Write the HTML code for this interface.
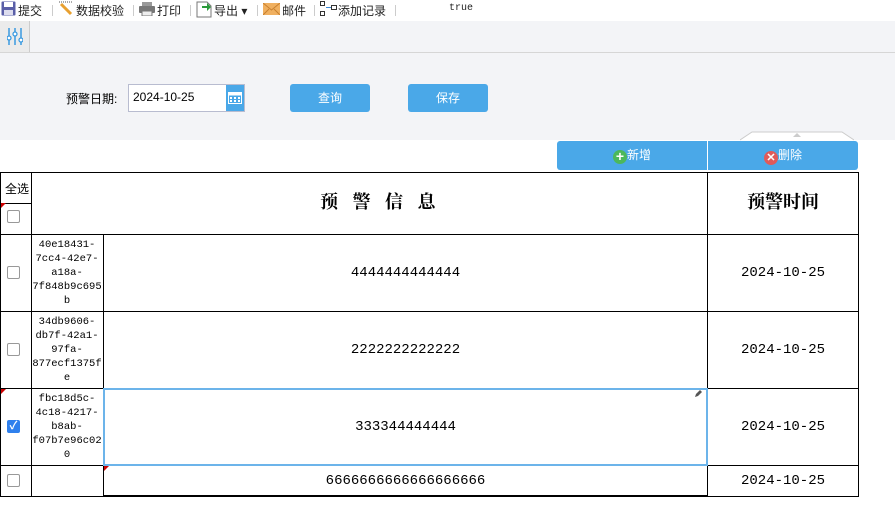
<!DOCTYPE html>
<html><head><meta charset="utf-8"><style>
*{margin:0;padding:0;box-sizing:border-box}
body{width:895px;height:515px;position:relative;background:#fff;font-family:"Liberation Sans","Noto Sans CJK SC",sans-serif;font-size:12px;color:#000;overflow:hidden}
.a{position:absolute}
.tb{left:0;top:0;width:895px;height:21px;background:#fff}
.tb span{position:absolute;top:2px;font-size:12px;color:#222}
.sep{position:absolute;top:5px;width:1px;height:11px;background:#ccc}
.hl{background:#000;height:1px}
.vl{background:#000;width:1px}
.mono{font-family:"Liberation Mono","Noto Sans CJK SC",monospace}
.cb{width:13px;height:13px;border:1px solid #999;border-radius:2px;background:#fff}
.uid{font-family:"Liberation Mono",monospace;font-size:10.5px;line-height:14px;text-align:center;width:72px;left:31px}
.c{text-align:center}
.btn{background:#4aa8e8;color:#fff;border-radius:3px;text-align:center;font-size:12px}
</style></head><body>
<div class="a tb">
 <svg class="a" style="left:1px;top:1px" width="15" height="15"><rect x="0.5" y="0.5" width="14" height="14" fill="#5a5fa8" rx="1"/><rect x="3" y="1" width="9" height="5" fill="#fff"/><rect x="3" y="9" width="9" height="5" fill="#dde"/></svg>
 <span style="left:18px">提交</span><div class="sep" style="left:52px"></div>
 <svg class="a" style="left:58px;top:1px" width="16" height="16"><line x1="3" y1="3" x2="13" y2="13" stroke="#e8a030" stroke-width="3"/><line x1="1" y1="1" x2="14" y2="1" stroke="#555" stroke-dasharray="1,1"/></svg>
 <span style="left:76px">数据校验</span><div class="sep" style="left:133px"></div>
 <svg class="a" style="left:139px;top:2px" width="16" height="14"><rect x="0" y="4" width="16" height="7" fill="#777" rx="1"/><rect x="3" y="0" width="10" height="4" fill="#999"/><rect x="3" y="9" width="10" height="5" fill="#eee" stroke="#777"/></svg>
 <span style="left:157px">打印</span><div class="sep" style="left:190px"></div>
 <svg class="a" style="left:196px;top:1px" width="16" height="17"><path d="M1 1h10l4 4v11H1z" fill="#fff" stroke="#777"/><path d="M6 5h5V2l4 4-4 4V7H6z" fill="#2a9a3a"/></svg>
 <span style="left:214px">导出 ▾</span><div class="sep" style="left:257px"></div>
 <svg class="a" style="left:263px;top:3px" width="17" height="12"><rect width="17" height="12" fill="#f0b060"/><path d="M0 0l8.5 7L17 0M0 12l6-6M17 12l-6-6" stroke="#c88030" fill="none"/></svg>
 <span style="left:282px">邮件</span><div class="sep" style="left:314px"></div>
 <svg class="a" style="left:320px;top:1px" width="18" height="16"><rect x="0.5" y="0.5" width="4" height="4" fill="none" stroke="#333"/><rect x="0.5" y="10.5" width="4" height="4" fill="none" stroke="#333"/><rect x="11.5" y="4.5" width="5" height="4" fill="none" stroke="#333"/><path d="M6 6.5h5" stroke="#3a8ad8"/></svg>
 <span style="left:338px">添加记录</span><div class="sep" style="left:395px"></div>
 <span class="mono" style="left:449px;font-size:10px;top:3px">true</span>
</div>
<div class="a" style="left:0;top:21px;width:895px;height:119px;background:#f3f4f7"></div>
<div class="a" style="left:0;top:21px;width:30px;height:31px;background:#ebebeb;border-right:1px solid #ccc"></div>
<div class="a" style="left:0;top:52px;width:895px;height:1px;background:#d6d6d6"></div>
<svg class="a" style="left:7px;top:28px" width="16" height="17"><g stroke="#3a9ae0" stroke-width="1.5" fill="none"><line x1="2" y1="0" x2="2" y2="17"/><line x1="8" y1="0" x2="8" y2="17"/><line x1="14" y1="0" x2="14" y2="17"/></g><g fill="#fff" stroke="#3a9ae0" stroke-width="1.3"><circle cx="2" cy="10" r="2"/><circle cx="8" cy="6" r="2"/><circle cx="14" cy="12" r="2"/></g></svg>
<div class="a" style="left:66px;top:90px;font-size:12px">预警日期:</div>
<div class="a" style="left:128px;top:84px;width:117px;height:28px;border:1px solid #b8bcd0;background:#fff"></div>
<div class="a" style="left:133px;top:90px;font-size:12px">2024-10-25</div>
<div class="a" style="left:226px;top:85px;width:18px;height:26px;background:#4aa8e8"></div>
<svg class="a" style="left:228px;top:91px" width="14" height="13"><rect x="0.5" y="1.5" width="13" height="11" fill="none" stroke="#fff"/><rect x="0.5" y="1.5" width="13" height="3" fill="#fff"/><g fill="#fff"><rect x="2" y="6" width="2" height="2"/><rect x="6" y="6" width="2" height="2"/><rect x="10" y="6" width="2" height="2"/><rect x="2" y="9" width="2" height="2"/><rect x="6" y="9" width="2" height="2"/><rect x="10" y="9" width="2" height="2"/></g></svg>
<div class="a btn" style="left:290px;top:84px;width:80px;height:28px;line-height:28px">查询</div>
<div class="a btn" style="left:408px;top:84px;width:80px;height:28px;line-height:28px">保存</div>
<svg class="a" style="left:740px;top:131px" width="114" height="10"><path d="M0 9L12 1H102L114 9" fill="#fff" stroke="#ccc"/><path d="M53 6l4-4 4 4z" fill="#ccc"/></svg>
<div class="a btn" style="left:557px;top:141px;width:150px;height:29px;line-height:29px;border-radius:3px 0 0 3px"><span style="display:inline-block;width:14px;height:14px;border-radius:7px;background:#4cb85c;vertical-align:-2px;line-height:13px;font-weight:bold;font-size:14px">+</span>新增</div>
<div class="a btn" style="left:708px;top:141px;width:150px;height:29px;line-height:29px;border-radius:0 3px 3px 0"><span style="display:inline-block;width:14px;height:14px;border-radius:7px;background:#e05a5a;vertical-align:-2px;line-height:14px;font-weight:bold;font-size:11px">✕</span>删除</div>
<div class="a hl" style="left:0;top:172px;width:859px"></div>
<div class="a hl" style="left:0;top:203px;width:31px"></div>
<div class="a hl" style="left:0;top:234px;width:859px"></div>
<div class="a hl" style="left:0;top:311px;width:859px"></div>
<div class="a hl" style="left:0;top:388px;width:859px"></div>
<div class="a hl" style="left:0;top:465px;width:859px"></div>
<div class="a hl" style="left:0;top:496px;width:859px"></div>
<div class="a hl" style="left:103px;top:495px;width:605px;height:2px"></div>
<div class="a vl" style="left:0;top:172px;height:325px"></div>
<div class="a vl" style="left:31px;top:172px;height:325px"></div>
<div class="a vl" style="left:103px;top:234px;height:263px"></div>
<div class="a vl" style="left:707px;top:172px;height:325px"></div>
<div class="a vl" style="left:858px;top:172px;height:325px"></div>
<div class="a" style="left:103px;top:388px;width:605px;height:78px;border:2px solid #6cb4ea"></div>
<svg class="a" style="left:1px;top:203px" width="6" height="6"><path d="M0 0h5L0 5z" fill="#c00"/></svg>
<svg class="a" style="left:1px;top:389px" width="6" height="6"><path d="M0 0h5L0 5z" fill="#c00"/></svg>
<svg class="a" style="left:104px;top:466px" width="6" height="6"><path d="M0 0h5L0 5z" fill="#c00"/></svg>
<svg class="a" style="left:693px;top:389px" width="10" height="10"><path d="M2 8l1-3 4-4 2 2-4 4z" fill="#555"/></svg>
<div class="a" style="left:5px;top:180px;font-size:12px">全选</div>
<div class="a cb" style="left:7px;top:210px"></div>
<div class="a" style="left:320px;top:188px;font-family:'Noto Serif CJK SC',serif;font-size:18px;font-weight:bold;letter-spacing:5px;white-space:pre">预 警 信 息</div>
<div class="a" style="left:708px;top:188px;width:150px;text-align:center;font-family:'Noto Serif CJK SC',serif;font-size:18px;font-weight:bold">预警时间</div>
<div class="a cb" style="left:7px;top:266px"></div>
<div class="a cb" style="left:7px;top:343px"></div>
<div class="a" style="left:7px;top:420px;width:13px;height:13px;border-radius:2px;background:#2f80ed;color:#fff;font-size:11px;line-height:13px;text-align:center;font-weight:bold">✓</div>
<div class="a cb" style="left:7px;top:474px"></div>
<div class="a uid" style="top:238px">40e18431-<br>7cc4-42e7-<br>a18a-<br>7f848b9c695<br>b</div>
<div class="a uid" style="top:315px">34db9606-<br>db7f-42a1-<br>97fa-<br>877ecf1375f<br>e</div>
<div class="a uid" style="top:392px">fbc18d5c-<br>4c18-4217-<br>b8ab-<br>f07b7e96c02<br>0</div>
<div class="a mono c" style="left:104px;top:265px;width:603px;font-size:14px">4444444444444</div>
<div class="a mono c" style="left:104px;top:342px;width:603px;font-size:14px">2222222222222</div>
<div class="a mono c" style="left:104px;top:419px;width:603px;font-size:14px">333344444444</div>
<div class="a mono c" style="left:104px;top:473px;width:603px;font-size:14px">6666666666666666666</div>
<div class="a mono c" style="left:708px;top:265px;width:150px;font-size:14px">2024-10-25</div>
<div class="a mono c" style="left:708px;top:342px;width:150px;font-size:14px">2024-10-25</div>
<div class="a mono c" style="left:708px;top:419px;width:150px;font-size:14px">2024-10-25</div>
<div class="a mono c" style="left:708px;top:473px;width:150px;font-size:14px">2024-10-25</div>
</body></html>
